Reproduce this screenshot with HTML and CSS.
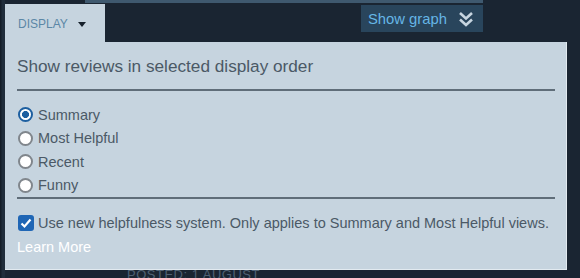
FILE: index.html
```html
<!DOCTYPE html>
<html>
<head>
<meta charset="utf-8">
<link rel="stylesheet" href="styles.css">
</head>
<body>
<div class="page">
  <div class="topstrip"></div>
  <div class="toolbar">
    <div class="graph-btn">
      <span>Show graph</span>
      <svg class="chev" width="16" height="16" viewBox="0 0 16 16">
        <polyline points="2,2 8,7.5 14,2" fill="none" stroke="#c7d5e0" stroke-width="2.6" stroke-linejoin="miter"/>
        <polyline points="2,8.5 8,14 14,8.5" fill="none" stroke="#c7d5e0" stroke-width="2.6" stroke-linejoin="miter"/>
      </svg>
    </div>
  </div>
  <div class="posted">POSTED: 1 AUGUST</div>

  <div class="dropdown">
    <div class="tab"><span class="tab-label">DISPLAY</span><span class="tri"></span></div>
    <div class="panel">
      <div class="intro">Show reviews in selected display order</div>
      <div class="sep"></div>
      <div class="options">
        <div class="opt"><span class="radio on"></span><span>Summary</span></div>
        <div class="opt"><span class="radio"></span><span>Most Helpful</span></div>
        <div class="opt"><span class="radio"></span><span>Recent</span></div>
        <div class="opt"><span class="radio"></span><span>Funny</span></div>
      </div>
      <div class="sep sep2"></div>
      <div class="checkrow">
        <span class="check">
          <svg width="16" height="16" viewBox="0 0 16 16"><polyline points="3.5,8.5 6.5,11.5 12.5,4.5" fill="none" stroke="#ffffff" stroke-width="2.2"/></svg>
        </span>
        <span>Use new helpfulness system. Only applies to Summary and Most Helpful views.</span>
      </div>
      <div class="learn">Learn More</div>
    </div>
  </div>
</div>
</body>
</html>
```

FILE: styles.css
```css
html, body {
  margin: 0;
  padding: 0;
}
body {
  background: #1a2532;
  font-family: "Liberation Sans", Arial, sans-serif;
  width: 580px;
  height: 278px;
  overflow: hidden;
}
.page {
  position: relative;
  width: 580px;
  height: 278px;
  background: linear-gradient(to right, #141d28 0, #141d28 1px, #202d3b 2px, #202d3b 5px, #1a2532 5px);
}
.topstrip {
  margin-left: 85px;
  width: 398px;
  height: 3px;
  background: #3f596f;
}
.toolbar {
  display: flex;
  padding-left: 361px;
  margin-top: 2px;
}
.graph-btn {
  width: 122px;
  height: 27px;
  box-sizing: border-box;
  background: #29455c;
  display: flex;
  align-items: center;
  padding-left: 7px;
  color: #66b6e6;
  font-size: 14.8px;
}
.chev {
  margin-left: 11px;
  margin-top: 1px;
}
.posted {
  margin-top: 236px;
  padding-left: 127px;
  color: #4f6174;
  font-size: 13px;
  letter-spacing: 0.5px;
  line-height: 14px;
}
.dropdown {
  position: absolute;
  left: 5px;
  top: 4px;
}
.tab {
  width: 100px;
  height: 38px;
  background: #c6d4df;
  box-sizing: border-box;
  padding-left: 13px;
  padding-top: 13px;
  display: flex;
  align-items: flex-start;
}
.tab-label {
  color: #5b87a6;
  font-size: 12px;
  line-height: 14px;
}
.tri {
  width: 0;
  height: 0;
  border-left: 4px solid transparent;
  border-right: 4px solid transparent;
  border-top: 5px solid #16202b;
  margin-left: 10px;
  margin-top: 5px;
}
.panel {
  width: 562px;
  height: 228px;
  box-sizing: border-box;
  background: #c6d4df;
  border-right: 1px solid #e2eaf0;
  border-bottom: 1px solid #e2eaf0;
  padding: 15px 11px 0 12px;
  color: #4b5966;
  font-size: 14.5px;
}
.intro {
  line-height: 18px;
  font-size: 17.2px;
}
.sep {
  height: 2px;
  background: #5f6d79;
  margin-top: 14px;
}
.options {
  margin-top: 12px;
}
.opt {
  height: 23.5px;
  display: flex;
  align-items: center;
}
.radio {
  width: 15px;
  height: 15px;
  box-sizing: border-box;
  border-radius: 50%;
  background: #ffffff;
  border: 2px solid #80868c;
  margin-left: 1px;
  margin-right: 5px;
  flex: none;
}
.radio.on {
  border: 2px solid #1d5fa0;
  background: radial-gradient(circle, #1d5fa0 0, #1d5fa0 3.2px, #ffffff 3.8px);
}
.sep2 {
  margin-top: 0;
}
.checkrow {
  margin-top: 12px;
  height: 24px;
  display: flex;
  align-items: center;
}
.check {
  width: 16px;
  height: 16px;
  border-radius: 3px;
  background: #1f66b5;
  margin-left: 1px;
  margin-right: 4px;
  flex: none;
  display: flex;
}
.learn {
  margin-top: 2px;
  line-height: 20px;
  color: #ffffff;
}
```
